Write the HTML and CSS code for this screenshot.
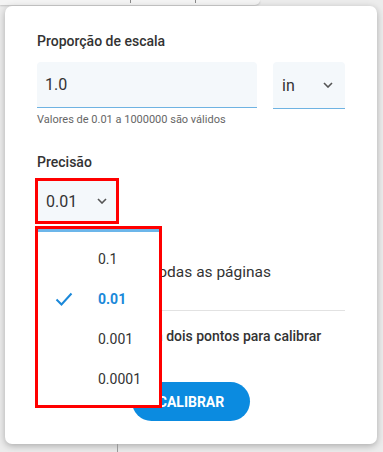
FILE: index.html
```
<!DOCTYPE html>
<html lang="pt">
<head>
  <meta charset="UTF-8">
  <title>Calibrar escala</title>
  <link rel="stylesheet" href="styles.css">
</head>
<body>

  <div class="topbar">
    <span class="tick"></span>
    <span class="tick"></span>
  </div>

  <div class="card">
    <div class="label">Proporção de escala</div>
    <div class="row">
      <div class="input">1.0</div>
      <div class="select unit">
        <span>in</span>
        <svg class="chev" width="10" height="6" viewBox="0 0 10 6"><path d="M1 1 L5 5 L9 1" fill="none" stroke="#555" stroke-width="1.6"/></svg>
      </div>
    </div>
    <div class="hint">Valores de 0.01 a 1000000 são válidos</div>

    <div class="label precisao">Precisão</div>
    <div class="prec-wrap">
      <div class="select prec">
        <span>0.01</span>
        <svg class="chev" width="10" height="6" viewBox="0 0 10 6"><path d="M1 1 L5 5 L9 1" fill="none" stroke="#555" stroke-width="1.6"/></svg>
      </div>

      <ul class="menu">
        <li>0.1</li>
        <li class="ativo">
          <svg class="check" width="18" height="14" viewBox="0 0 18 14"><path d="M1.5 7.5 L6.5 12.5 L16.5 1.5" fill="none" stroke="#1a88d9" stroke-width="2"/></svg>
          0.01
        </li>
        <li>0.001</li>
        <li>0.0001</li>
      </ul>
    </div>

    <label class="check-row">
      <span class="box"></span>
      Aplicar para todas as páginas
    </label>

    <div class="divider"></div>

    <div class="note">Clique em dois pontos para calibrar</div>

    <div class="actions">
      <button class="btn">CALIBRAR</button>
    </div>
  </div>

  <div class="stub"></div>

</body>
</html>
```

FILE: styles.css
```
body {
  margin: 0;
  background-color: #ececec;
  font-family: Roboto, 'Noto Sans', sans-serif;
  color: #333;
  height: 452px;
  overflow: hidden;
}

.topbar {
  display: flex;
  gap: 64px;
  width: 260px;
  height: 5px;
  padding-left: 130px;
  box-sizing: border-box;
  background-color: #f4f4f4;
  border-bottom-right-radius: 6px;
  box-shadow: 0 1px 2px rgba(0, 0, 0, 0.18);
}

.tick {
  width: 1px;
  height: 3px;
  background-color: #888;
}

.card {
  margin: 1px 0 0 5px;
  width: 372px;
  height: 438px;
  box-sizing: border-box;
  padding: 25px 32px 0 32px;
  background-color: white;
  border-radius: 7px;
  box-shadow: 0 2px 7px rgba(0, 0, 0, 0.28);
}

.label {
  font-size: 14px;
  font-weight: 500;
  line-height: 20px;
}

.row {
  display: flex;
  gap: 16px;
  margin-top: 11px;
}

.input {
  width: 220px;
  height: 46px;
  box-sizing: border-box;
  padding: 0 8px;
  display: flex;
  align-items: center;
  font-size: 16px;
  background-color: #f4f8fb;
  border-bottom: 1px solid #6fb3e2;
  border-radius: 4px 4px 0 0;
}

.select {
  display: flex;
  align-items: center;
  justify-content: space-between;
  box-sizing: border-box;
  font-size: 16px;
  background-color: #f4f8fb;
  border-radius: 4px 4px 0 0;
}

.unit {
  width: 72px;
  height: 47px;
  padding: 0 12px 0 9px;
  border-bottom: 1px solid #6fb3e2;
}

.hint {
  margin-top: 4px;
  font-size: 11px;
  line-height: 14px;
  color: #666;
}

.precisao {
  margin-top: 25px;
}

.prec-wrap {
  position: relative;
  margin-top: 8px;
  width: 80px;
}

.prec {
  width: 80px;
  height: 42px;
  padding: 0 10px 0 9px;
  border-radius: 0;
  outline: 3px solid #f00;
  outline-offset: -1px;
}

.menu {
  position: absolute;
  top: 48px;
  left: 0;
  width: 123px;
  margin: 0;
  padding: 7px 0;
  list-style: none;
  background-color: white;
  border-top: 4px solid #6cb6ea;
  outline: 3px solid #f00;
  outline-offset: -1px;
  z-index: 2;
}

.menu li {
  position: relative;
  height: 40px;
  line-height: 40px;
  padding-left: 61px;
  font-size: 14px;
  color: #333;
}

.menu li.ativo {
  color: #1a88d9;
  font-weight: 700;
}

.check {
  position: absolute;
  left: 18px;
  top: 13px;
}

.check-row {
  display: flex;
  align-items: center;
  gap: 10px;
  margin-top: 38px;
  font-size: 15.5px;
  line-height: 24px;
  color: #333;
}

.box {
  width: 16px;
  height: 16px;
  border: 2px solid #777;
  border-radius: 2px;
}

.divider {
  margin-top: 26px;
  height: 1px;
  background-color: #e2e2e2;
}

.note {
  margin-top: 15px;
  padding-left: 63px;
  font-size: 14px;
  font-weight: 500;
  line-height: 20px;
}

.actions {
  display: flex;
  justify-content: center;
  margin-top: 36px;
}

.btn {
  width: 118px;
  height: 39px;
  border: none;
  border-radius: 20px;
  background-color: #0b8be0;
  color: white;
  font-family: Roboto, sans-serif;
  font-size: 14px;
  font-weight: 700;
}

.stub {
  margin-left: 117px;
  width: 1px;
  height: 8px;
  background-color: #999;
}
```
